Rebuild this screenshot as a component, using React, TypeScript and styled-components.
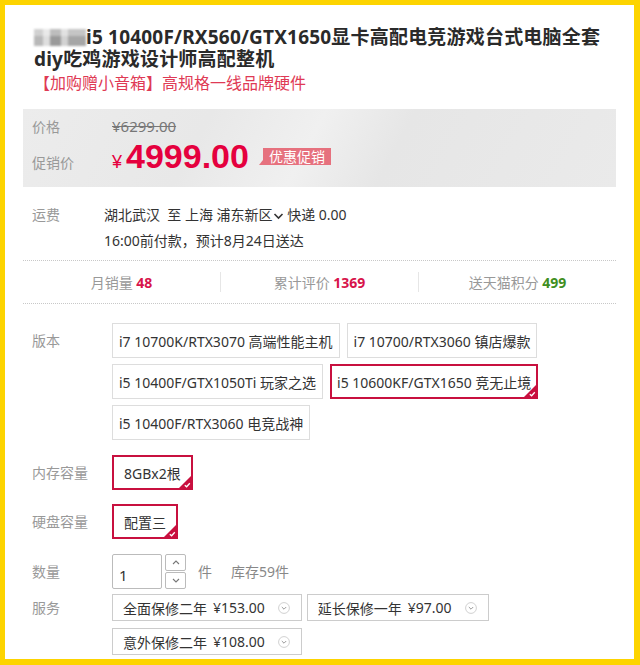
import React from "react";
import styled, { createGlobalStyle } from "styled-components";

const GlobalStyle = createGlobalStyle`
  html, body {
    margin: 0;
    padding: 0;
    background: #fff;
  }
  body {
    font-family: "Noto Sans", "Noto Sans CJK SC", sans-serif;
    color: #333;
  }
  * {
    box-sizing: border-box;
  }
`;

const Frame = styled.div`
  width: 640px;
  height: 665px;
  border-style: solid;
  border-color: #fdd400;
  border-width: 5px 6px 6px 5px;
  background: #fff;
  overflow: hidden;
`;

const Content = styled.div`
  padding: 21px 18px 0 18px;
`;

const Title = styled.h1`
  margin: 0;
  padding-left: 11px;
  font-size: 19px;
  line-height: 22px;
  letter-spacing: 0.2px;
  font-weight: 700;
  color: #2a2a2a;
  white-space: nowrap;
`;

const Brand = styled.span`
  display: inline-block;
  width: 52px;
  height: 17px;
  vertical-align: -2px;
  background: linear-gradient(
      180deg,
      rgba(255, 255, 255, 0.35) 0 40%,
      rgba(255, 255, 255, 0) 40% 100%
    ),
    linear-gradient(
      90deg,
      #b8b8b8 0 18%,
      #dedede 18% 30%,
      #9a9a9a 30% 52%,
      #d2d2d2 52% 66%,
      #a6a6a6 66% 100%
    );
  filter: blur(1.2px);
`;

const Promo = styled.div`
  margin-top: 2px;
  padding-left: 11px;
  font-size: 16px;
  line-height: 22px;
  color: #df3a55;
`;

const PriceBox = styled.div`
  margin-top: 15px;
  height: 78px;
  padding: 7px 0 0 9px;
  background: linear-gradient(
    118deg,
    #ececec 0%,
    #e8e8e8 30%,
    #f0f0f0 48%,
    #e6e6e6 62%,
    #eaeaea 100%
  );
`;

const PriceRow = styled.div<{ $h: number }>`
  display: flex;
  align-items: baseline;
  height: ${(p) => p.$h}px;
`;

const PriceLabel = styled.span`
  width: 80px;
  flex: none;
  font-size: 14px;
  color: #999;
`;

const OldPrice = styled.span`
  font-size: 15px;
  line-height: 21px;
  color: #777;
  text-decoration: line-through;
`;

const Yen = styled.span`
  font-family: "Liberation Sans", sans-serif;
  font-size: 18px;
  color: #e5003e;
  margin-right: 4px;
`;

const BigPrice = styled.span`
  font-family: "Liberation Sans", sans-serif;
  font-size: 34px;
  line-height: 39px;
  font-weight: 700;
  color: #e5003e;
`;

const Badge = styled.span`
  position: relative;
  align-self: center;
  margin-left: 14px;
  padding: 0 6px;
  height: 17px;
  line-height: 17px;
  font-size: 14px;
  color: #fff;
  background: #e6717e;

  &::before {
    content: "";
    position: absolute;
    left: -4px;
    bottom: 0;
    border-style: solid;
    border-width: 0 0 5px 4px;
    border-color: transparent transparent #e6717e transparent;
  }
`;

const InfoRow = styled.div`
  display: flex;
  margin-top: 15px;
  padding-left: 9px;
  font-size: 14px;
  line-height: 26px;
`;

const InfoLabel = styled.div`
  width: 72px;
  flex: none;
  color: #999;
`;

const InfoValue = styled.div`
  color: #333;
`;

const Stats = styled.div`
  margin-top: 6px;
  height: 44px;
  border-top: 1px dotted #c8c8c8;
  border-bottom: 1px dotted #c8c8c8;
  display: grid;
  grid-template-columns: 1fr 1px 1fr 1px 1fr;
  align-items: center;
  font-size: 14px;
`;

const StatItem = styled.div`
  text-align: center;
  color: #999;
`;

const StatValue = styled.b<{ $color: string }>`
  color: ${(p) => p.$color};
  font-weight: 700;
`;

const StatDivider = styled.div`
  width: 1px;
  height: 20px;
  background: #e6e6e6;
`;

const SpecRow = styled.div<{ $gap: number }>`
  display: flex;
  align-items: flex-start;
  margin-top: ${(p) => p.$gap}px;
  padding-left: 9px;
`;

const SpecLabel = styled.div<{ $h: number }>`
  width: 80px;
  flex: none;
  font-size: 14px;
  line-height: ${(p) => p.$h}px;
  color: #999;
`;

const Options = styled.div<{ $gap: string }>`
  display: flex;
  flex-wrap: wrap;
  gap: ${(p) => p.$gap};
  max-width: 440px;
`;

const Option = styled.div<{ $selected?: boolean; $pad?: number }>`
  position: relative;
  display: flex;
  align-items: center;
  height: 35px;
  padding: 0 ${(p) => (p.$pad ?? 6) - (p.$selected ? 1 : 0)}px;
  border: ${(p) => (p.$selected ? "2px solid #c8103f" : "1px solid #ddd")};
  background: #fff;
  font-size: 14px;
  color: #333;
  white-space: nowrap;
`;

const Corner = styled.svg`
  position: absolute;
  right: 0;
  bottom: 0;
`;

const QtyInput = styled.div`
  width: 50px;
  height: 35px;
  padding: 9px 0 0 6px;
  border: 1px solid #bbb;
  border-radius: 2px;
  font-size: 15px;
  line-height: 22px;
  color: #333;
`;

const Spinner = styled.div`
  display: flex;
  flex-direction: column;
  gap: 1px;
  margin-left: 3px;
`;

const SpinBtn = styled.div`
  width: 21px;
  height: 17px;
  border: 1px solid #bbb;
  border-radius: 2px;
  display: flex;
  align-items: center;
  justify-content: center;
`;

const Muted = styled.span<{ $ml: number }>`
  margin-left: ${(p) => p.$ml}px;
  font-size: 14px;
  line-height: 35px;
  color: #888;
`;

const QtyWrap = styled.div`
  display: flex;
  align-items: center;
`;

const ServiceBtn = styled.div`
  display: flex;
  align-items: center;
  height: 27px;
  padding: 0 11px 0 10px;
  border: 1px solid #ccc;
  font-size: 14px;
  color: #333;
  white-space: nowrap;
`;

const ServicePrice = styled.span`
  margin-left: 6px;
`;

const Circle = styled.svg`
  margin-left: 13px;
`;

const Check = () => (
  <Corner width="12" height="12" viewBox="0 0 12 12">
    <polygon points="12,0 12,12 0,12" fill="#c8103f" />
    <polyline
      points="5.8,9.2 7.6,10.8 10.8,7.2"
      fill="none"
      stroke="#fff"
      strokeWidth="1.3"
    />
  </Corner>
);

const Chevron = ({ up }: { up?: boolean }) => (
  <svg width="8" height="5" viewBox="0 0 8 5">
    <polyline
      points={up ? "1,4 4,1 7,4" : "1,1 4,4 7,1"}
      fill="none"
      stroke="#777"
      strokeWidth="1.1"
    />
  </svg>
);

const DownCircle = () => (
  <Circle width="12" height="12" viewBox="0 0 12 12">
    <circle cx="6" cy="6" r="5.4" fill="none" stroke="#ccc" strokeWidth="0.9" />
    <polyline
      points="3.8,5 6,7.2 8.2,5"
      fill="none"
      stroke="#999"
      strokeWidth="1"
    />
  </Circle>
);

const versions = [
  "i7 10700K/RTX3070 高端性能主机",
  "i7 10700/RTX3060 镇店爆款",
  "i5 10400F/GTX1050Ti 玩家之选",
  "i5 10600KF/GTX1650 竞无止境",
  "i5 10400F/RTX3060 电竞战神",
];

const services = [
  { name: "全面保修二年", price: "¥153.00" },
  { name: "延长保修一年", price: "¥97.00" },
  { name: "意外保修二年", price: "¥108.00" },
];

export default function App() {
  return (
    <Frame>
      <GlobalStyle />
      <Content>
        <Title>
          <Brand />
          i5 10400F/RX560/GTX1650显卡高配电竞游戏台式电脑全套
          <br />
          diy吃鸡游戏设计师高配整机
        </Title>
        <Promo>【加购赠小音箱】高规格一线品牌硬件</Promo>

        <PriceBox>
          <PriceRow $h={21}>
            <PriceLabel>价格</PriceLabel>
            <OldPrice>¥6299.00</OldPrice>
          </PriceRow>
          <PriceRow $h={39}>
            <PriceLabel>促销价</PriceLabel>
            <Yen>¥</Yen>
            <BigPrice>4999.00</BigPrice>
            <Badge>优惠促销</Badge>
          </PriceRow>
        </PriceBox>

        <InfoRow>
          <InfoLabel>运费</InfoLabel>
          <InfoValue>
            湖北武汉&nbsp; 至 上海 浦东新区
            <svg width="11" height="8" viewBox="0 0 11 8">
              <polyline
                points="1.5,2 5.5,6 9.5,2"
                fill="none"
                stroke="#333"
                strokeWidth="1.6"
              />
            </svg>{" "}
            快递 0.00
            <br />
            16:00前付款，预计8月24日送达
          </InfoValue>
        </InfoRow>

        <Stats>
          <StatItem>
            月销量 <StatValue $color="#d7144b">48</StatValue>
          </StatItem>
          <StatDivider />
          <StatItem>
            累计评价 <StatValue $color="#d7144b">1369</StatValue>
          </StatItem>
          <StatDivider />
          <StatItem>
            送天猫积分 <StatValue $color="#3f8f22">499</StatValue>
          </StatItem>
        </Stats>

        <SpecRow $gap={19}>
          <SpecLabel $h={35}>版本</SpecLabel>
          <Options $gap="6px 7px">
            {versions.map((v, i) => (
              <Option key={v} $selected={i === 3}>
                {v}
                {i === 3 && <Check />}
              </Option>
            ))}
          </Options>
        </SpecRow>

        <SpecRow $gap={15}>
          <SpecLabel $h={35}>内存容量</SpecLabel>
          <Options $gap="6px 7px">
            <Option $selected $pad={11}>
              8GBx2根
              <Check />
            </Option>
          </Options>
        </SpecRow>

        <SpecRow $gap={14}>
          <SpecLabel $h={35}>硬盘容量</SpecLabel>
          <Options $gap="6px 7px">
            <Option $selected $pad={11}>
              配置三
              <Check />
            </Option>
          </Options>
        </SpecRow>

        <SpecRow $gap={15}>
          <SpecLabel $h={35}>数量</SpecLabel>
          <QtyWrap>
            <QtyInput>1</QtyInput>
            <Spinner>
              <SpinBtn>
                <Chevron up />
              </SpinBtn>
              <SpinBtn>
                <Chevron />
              </SpinBtn>
            </Spinner>
            <Muted $ml={12}>件</Muted>
            <Muted $ml={19}>库存59件</Muted>
          </QtyWrap>
        </SpecRow>

        <SpecRow $gap={5}>
          <SpecLabel $h={27}>服务</SpecLabel>
          <Options $gap="7px 5px">
            {services.map((s) => (
              <ServiceBtn key={s.name}>
                {s.name}
                <ServicePrice>{s.price}</ServicePrice>
                <DownCircle />
              </ServiceBtn>
            ))}
          </Options>
        </SpecRow>
      </Content>
    </Frame>
  );
}
